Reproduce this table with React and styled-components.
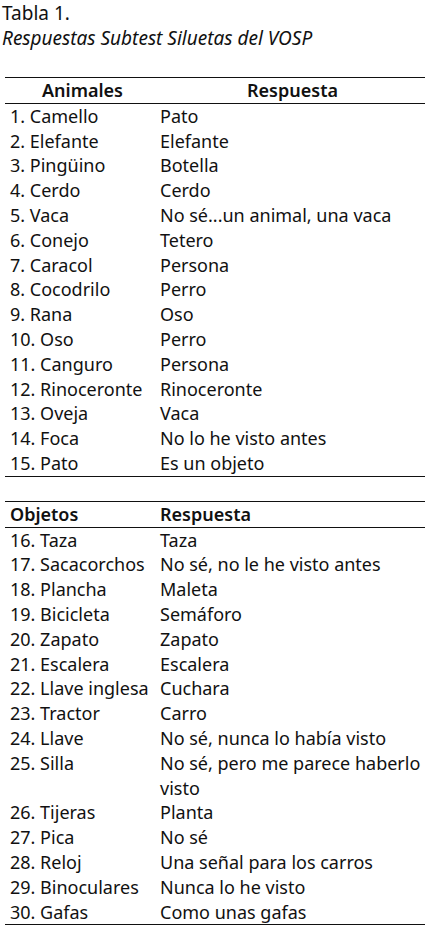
import React from 'react'
import styled, { createGlobalStyle } from 'styled-components'

const Global = createGlobalStyle`
body {
  margin: 0;
  background: #fff;
  color: #111;
  font-family: "Noto Sans", "Liberation Sans", sans-serif;
}
`

const Page = styled.div`
width: 431px;
padding: 1px 0 0 0;
box-sizing: border-box;
`

const Caption = styled.div`
padding-left: 2px;
font-size: 19px;
line-height: 25px;
margin-bottom: 26px;
`

const CaptionTitle = styled.div`
font-style: italic;
`

const Table = styled.table`
width: 420px;
margin: 0 0 0 5px;
border-collapse: collapse;
font-size: 18px;
line-height: 24.8px;
border-top: 1px solid #111;
border-bottom: 1px solid #111;
margin-bottom: ${props => props.$gap || 0}px;
`

const Head = styled.th`
font-weight: 600;
text-align: ${props => props.$align || 'left'};
padding: 0 0 0 5px;
border-bottom: 1px solid #111;
width: ${props => props.$w || 'auto'};
`

const Cell = styled.td`
padding: 0 0 0 5px;
vertical-align: top;
white-space: nowrap;
`

const animales = [
  ['1. Camello', 'Pato'],
  ['2. Elefante', 'Elefante'],
  ['3. Pingüino', 'Botella'],
  ['4. Cerdo', 'Cerdo'],
  ['5. Vaca', 'No sé...un animal, una vaca'],
  ['6. Conejo', 'Tetero'],
  ['7. Caracol', 'Persona'],
  ['8. Cocodrilo', 'Perro'],
  ['9. Rana', 'Oso'],
  ['10. Oso', 'Perro'],
  ['11. Canguro', 'Persona'],
  ['12. Rinoceronte', 'Rinoceronte'],
  ['13. Oveja', 'Vaca'],
  ['14. Foca', 'No lo he visto antes'],
  ['15. Pato', 'Es un objeto'],
]

const objetos = [
  ['16. Taza', 'Taza'],
  ['17. Sacacorchos', 'No sé, no le he visto antes'],
  ['18. Plancha', 'Maleta'],
  ['19. Bicicleta', 'Semáforo'],
  ['20. Zapato', 'Zapato'],
  ['21. Escalera', 'Escalera'],
  ['22. Llave inglesa', 'Cuchara'],
  ['23. Tractor', 'Carro'],
  ['24. Llave', 'No sé, nunca lo había visto'],
  ['25. Silla', ['No sé, pero me parece haberlo', 'visto']],
  ['26. Tijeras', 'Planta'],
  ['27. Pica', 'No sé'],
  ['28. Reloj', 'Una señal para los carros'],
  ['29. Binoculares', 'Nunca lo he visto'],
  ['30. Gafas', 'Como unas gafas'],
]

const Rows = ({ data }) =>
  data.map(([item, answer]) => (
    <tr key={item}>
      <Cell>{item}</Cell>
      <Cell>
        {Array.isArray(answer)
          ? answer.map((line, i) => <div key={i}>{line}</div>)
          : answer}
      </Cell>
    </tr>
  ))

const App = () => {
  return (
    <Page>
      <Global />
      <Caption>
        <div>Tabla 1.</div>
        <CaptionTitle>Respuestas Subtest Siluetas del VOSP</CaptionTitle>
      </Caption>

      <Table $gap={24}>
        <thead>
          <tr>
            <Head $align="center" $w="145px">Animales</Head>
            <Head $align="center">Respuesta</Head>
          </tr>
        </thead>
        <tbody>
          <Rows data={animales} />
        </tbody>
      </Table>

      <Table>
        <thead>
          <tr>
            <Head $w="145px">Objetos</Head>
            <Head>Respuesta</Head>
          </tr>
        </thead>
        <tbody>
          <Rows data={objetos} />
        </tbody>
      </Table>
    </Page>
  )
}

export default App
